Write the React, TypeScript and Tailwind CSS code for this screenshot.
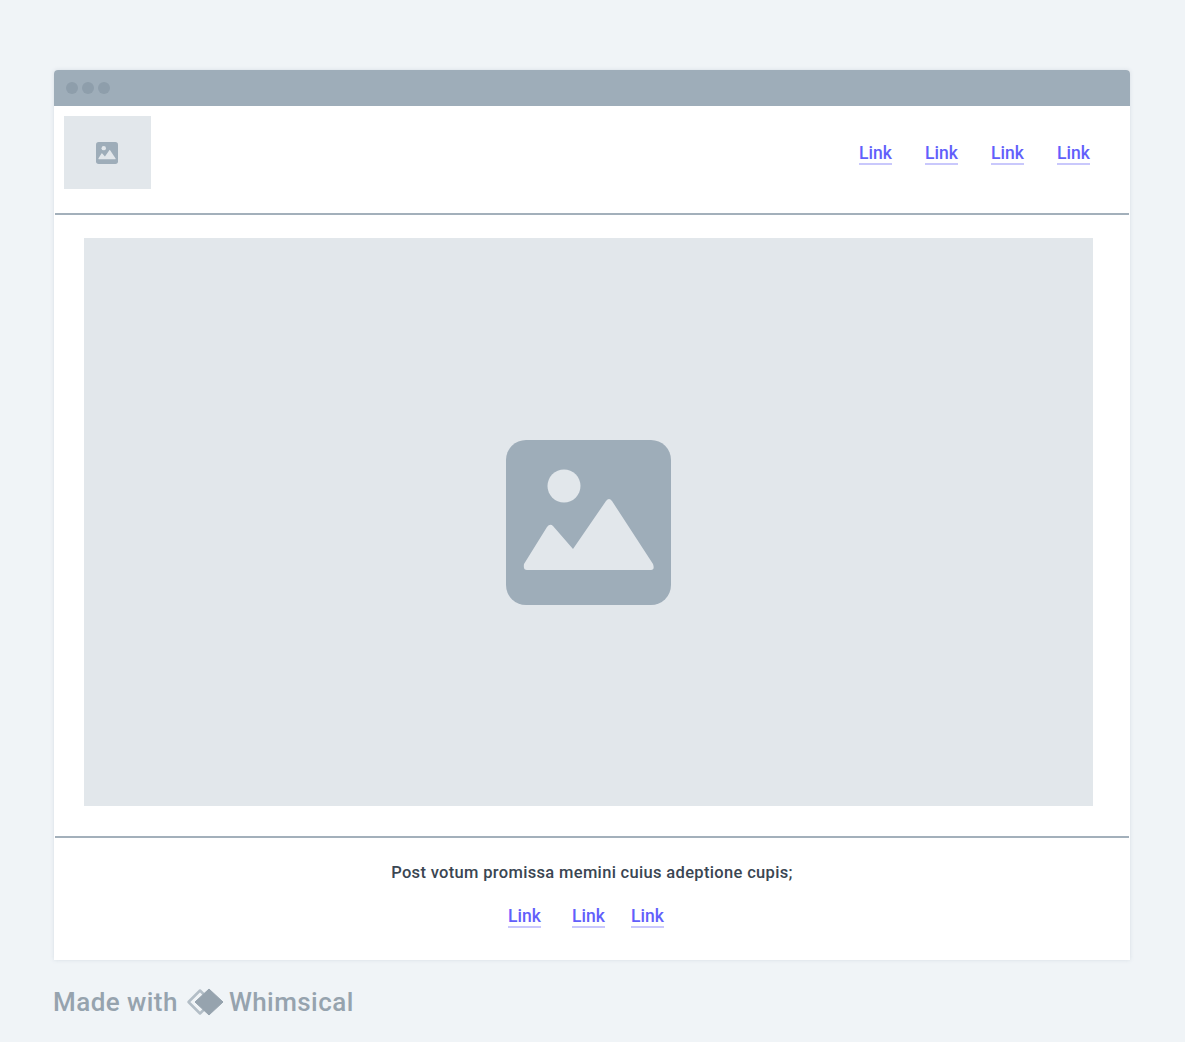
import React from 'react';

const ImageIcon = ({ className }: { className: string }) => (
  <svg viewBox="0 0 165 165" className={className}>
    <rect width="165" height="165" rx="20" fill="#9eadb9" />
    <circle cx="58" cy="46" r="16.5" fill="#e2e7eb" />
    <path
      d="M18 124 L41 87 Q44 83 47 86 L67 109 L100 61 Q103 57 106 61 L147 124 Q149 130 145 130 L21 130 Q17 130 18 124 Z"
      fill="#e2e7eb"
    />
  </svg>
);

const TextLink = () => (
  <a className="block w-[33px] text-center text-[17.5px] leading-[20px] font-medium text-[#625ffb] border-b-2 border-[#c9c8fc] cursor-pointer whitespace-nowrap">
    Link
  </a>
);

export default function App() {
  return (
    <div className="min-h-[1042px] bg-[#f0f4f7] pt-[70px] pl-[54px] pr-[55px] font-['Roboto',sans-serif]">
      <div className="h-[890px] bg-white rounded-t-[4px] shadow-[0_0_4px_rgba(120,140,160,0.2)] flex flex-col">
        <div className="h-[36px] shrink-0 bg-[#9eadb9] rounded-t-[4px] flex items-center gap-[4px] pl-[12px]">
          <span className="w-[12px] h-[12px] rounded-full bg-[#8e9eab]" />
          <span className="w-[12px] h-[12px] rounded-full bg-[#8e9eab]" />
          <span className="w-[12px] h-[12px] rounded-full bg-[#8e9eab]" />
        </div>

        <div className="h-[109px] shrink-0 mx-px border-b-2 border-[#a3b0bb] flex justify-between pl-[9px] pr-[39px] pt-[10px]">
          <div className="w-[87px] h-[73px] bg-[#e2e7eb] flex items-center justify-center">
            <ImageIcon className="w-[22px] h-[22px] -ml-[1px]" />
          </div>
          <nav className="flex gap-[33px] pt-[27px] h-[49px]">
            <TextLink />
            <TextLink />
            <TextLink />
            <TextLink />
          </nav>
        </div>

        <div className="h-[623px] shrink-0 mx-px border-b-2 border-[#a3b0bb] pt-[23px] pl-[29px] pr-[36px]">
          <div className="h-[568px] bg-[#e2e7eb] flex items-center justify-center">
            <ImageIcon className="w-[165px] h-[165px]" />
          </div>
        </div>

        <div className="flex flex-col items-center pt-[25px]">
          <p className="text-[16.5px] leading-[20px] font-medium text-[#3a4652] tracking-[0.33px]">
            Post votum promissa memini cuius adeptione cupis;
          </p>
          <div className="flex mt-[23px] mr-[12px]">
            <TextLink />
            <span className="w-[31px]" />
            <TextLink />
            <span className="w-[26px]" />
            <TextLink />
          </div>
        </div>
      </div>

      <div className="flex items-center mt-[24px] -ml-[1px] h-[36px] text-[26px] leading-[36px] font-medium tracking-[0.45px] text-[#96a3ae]">
        <span>Made with</span>
        <svg viewBox="0 0 38 28" className="w-[38px] h-[28px] ml-[8px] mr-[5px]">
          <path
            d="M14 2.5 L2.5 14 L14 25.5 L25.5 14 Z"
            fill="none"
            stroke="#b3bec7"
            strokeWidth="2.5"
            strokeLinejoin="round"
          />
          <path d="M23 1 L37 14 L23 27 L9 14 Z" fill="#96a3ae" stroke="#96a3ae" strokeWidth="1" strokeLinejoin="round" />
        </svg>
        <span>Whimsical</span>
      </div>
    </div>
  );
}
